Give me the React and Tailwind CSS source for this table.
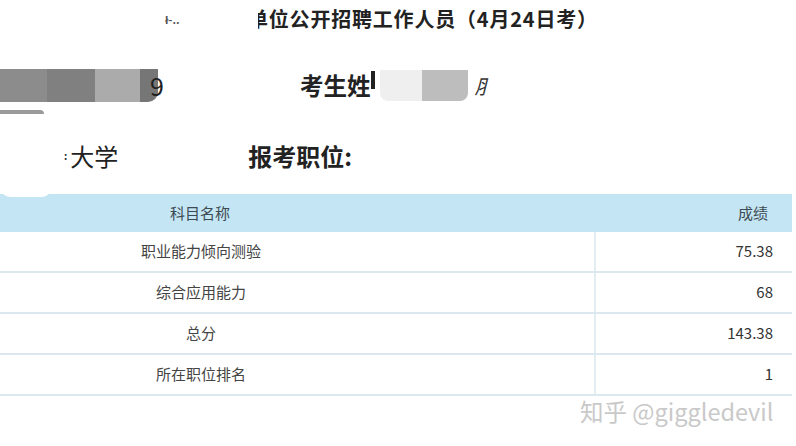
const rows = [
  { name: "职业能力倾向测验", score: "75.38" },
  { name: "综合应用能力", score: "68" },
  { name: "总分", score: "143.38" },
  { name: "所在职位排名", score: "1" },
];

// Score report screenshot (photographed, partly masked)
export default function App() {
  return (
    <div
      className="w-[796px] h-[446px] bg-white overflow-hidden text-[#222]"
      style={{ fontFamily: '"Noto Sans CJK SC", "Noto Sans", sans-serif' }}
    >
      {/* Title */}
      <div className="h-[38px] flex items-center">
        <span className="ml-[165px] w-[20px] text-[11px] font-bold text-[#555] leading-none">ł-..</span>
        <div className="relative ml-[63px]">
          <span className="text-[20px] font-bold tracking-[0.8px] whitespace-nowrap">单位公开招聘工作人员（4月24日考）</span>
          <div className="absolute left-0 top-0 w-[10px] h-full bg-white" />
        </div>
      </div>

      {/* Exam number + name (masked) */}
      <div className="mt-[31px] h-[33px] flex items-center">
        <div className="flex h-full rounded-br-[10px] overflow-hidden">
          <div className="w-[47px] bg-[#8c8c8c]" />
          <div className="w-[48px] bg-[#808080]" />
          <div className="w-[45px] bg-[#ababab]" />
          <div className="w-[18px] bg-[#767676]" />
        </div>
        <span className="-ml-[8px] text-[25px] leading-none">9</span>
        <span className="ml-[136px] text-[23.5px] font-bold leading-none">考生姓</span>
        <div className="ml-[1px] w-[4px] h-[18px] bg-[#222] self-start mt-[2px]" />
        <div className="ml-[5px] flex h-[31px] rounded-br-[8px] overflow-hidden">
          <div className="w-[42px] bg-[#efefef] rounded-bl-[8px]" />
          <div className="w-[46px] bg-[#bdbdbd]" />
        </div>
        <span className="ml-[6px] text-[20px] italic leading-none text-[#333]">⺼</span>
      </div>
      <div className="w-[44px] h-[4px] mt-[8px] bg-[#9a9a9a] rounded-tr-full" />

      {/* School + position */}
      <div className="mt-[27px] h-[30px] flex items-center">
        <span className="ml-[64px] text-[10px] font-bold leading-none">:</span>
        <span className="ml-[3px] text-[24px] leading-none">大学</span>
        <span className="ml-[130px] text-[24px] font-bold leading-none">报考职位:</span>
      </div>

      {/* Score table */}
      <div className="relative mt-[23px] w-[792px] text-[15px] text-[#444]">
        <div className="absolute -top-[8px] left-0 w-[52px] h-[11px] bg-white rounded-b-full" />
        <div className="grid grid-cols-[596px_196px] h-[38px] bg-[#c4e6f4] items-center">
          <div className="w-[400px] text-center text-[#3c4a52]">科目名称</div>
          <div className="text-right pr-[24px] text-[#3c4a52]">成绩</div>
        </div>
        {rows.map((r, i) => (
          <div
            key={i}
            className="grid grid-cols-[596px_196px] h-[41px] items-center border-b-[2px] border-[#dbe8ef]"
          >
            <div className="h-full flex items-center border-r-[2px] border-[#e3eef3]">
              <div className="w-[402px] text-center">{r.name}</div>
            </div>
            <div className="text-right pr-[19px] text-[#333]">{r.score}</div>
          </div>
        ))}
      </div>

      {/* Watermark */}
      <div className="mt-[4px] pl-[580px] text-[23.5px] leading-none text-[#c9c9c9] whitespace-nowrap" style={{ fontFamily: '"Noto Sans CJK SC", "DejaVu Sans", sans-serif' }}>
        知乎 @giggledevil
      </div>
    </div>
  );
}
